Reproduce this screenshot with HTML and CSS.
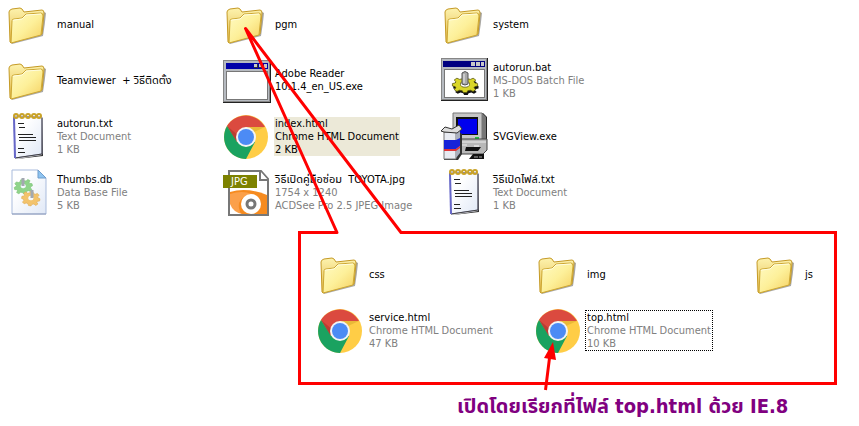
FILE: index.html
```html
<!DOCTYPE html>
<html lang="th">
<head>
    <meta charset="utf-8">
    <title>Files</title>
    <link rel="stylesheet" href="styles.css">
</head>
<body>
    <!-- icon set -->
    <svg class="icon-set" aria-hidden="true">
        <defs>
            <linearGradient id="front" x1="0" y1="0" x2="1" y2="1">
                <stop offset="0" stop-color="#fffbc4"/>
                <stop offset="0.5" stop-color="#fdf09a"/>
                <stop offset="1" stop-color="#f5cf5e"/>
            </linearGradient>
            <linearGradient id="back" x1="0" y1="0" x2="0" y2="1">
                <stop offset="0" stop-color="#fdf3ae"/>
                <stop offset="1" stop-color="#e3b848"/>
            </linearGradient>
            <linearGradient id="sheet" x1="0" y1="0" x2="1" y2="1">
                <stop offset="0.3" stop-color="#ffffff"/>
                <stop offset="1" stop-color="#e0e8f6"/>
            </linearGradient>
            <path id="gear" d="M-2-10h4l1 3 3 1 3-2 3 3-2 3 1 2 3 1v4l-3 1-1 2 2 3-3 3-3-2-3 1-1 3h-4l-1-3-3-1-3 2-3-3 2-3-1-2-3-1v-4l3-1 1-2-2-3 3-3 3 2 3-1z"/>
        </defs>
        <symbol id="folder" viewBox="0 0 48 48">
            <path d="M7 44l31-8q2-12 3-23l-2-1-3 20-29 10z" fill="#6f6c64" opacity=".6"/>
            <path d="M5 42L4 12q0-2 3-3l8-1q2 0 4 4l18-2q2 0 2 3l-2 21-31 9z" fill="url(#back)" stroke="#c59a25"/>
            <path d="M6 43l1-22q0-2 2-2l8-1 4-4 15-1q2 0 2 3l-2 19z" fill="url(#front)" stroke="#cda733"/>
            <path d="M8 21q0-1 1-1l8-1 4-4 15-1" fill="none" stroke="#fffde0"/>
        </symbol>
        <symbol id="window" viewBox="0 0 48 48">
            <path d="M0 4h48v43H0z" fill="#222"/>
            <path d="M0 4h47v42H0z" fill="#868686"/>
            <path d="M1 5h45v40H1z" fill="#b6bac0"/>
            <path d="M3 7h42v6H3z" fill="#0000a8"/>
            <path d="M31 8h4v4h-4zM36 8h4v4h-4zM41 8h3v4h-3z" fill="#c8c8c8"/>
            <path d="M34 8h1v4h-4v-1h3zM39 8h1v4h-4v-1h3z" fill="#333"/>
            <path d="M3 15h42v29H3z" fill="#777"/>
            <path d="M4 16h40v27H4z" fill="#fff"/>
        </symbol>
        <symbol id="batch" viewBox="0 0 48 48">
            <path d="M0 2h47v43H0z" fill="#222"/>
            <path d="M0 2h46v42H0z" fill="#868686"/>
            <path d="M1 3h44v40H1z" fill="#b6bac0"/>
            <path d="M2 5h42v6H2z" fill="#000080"/>
            <path d="M30 6h4v4h-4zM35 6h4v4h-4zM40 6h3v4h-3z" fill="#c8c8c8"/>
            <path d="M3 13h41v29H3z" fill="#777"/>
            <path d="M4 14h39v27H4z" fill="#fff"/>
            <g transform="translate(24 27) scale(.9 .6)">
                <use href="#gear" transform="translate(1 4)" fill="#111"/>
                <use href="#gear" fill="#d9d629" stroke="#55530a"/>
                <ellipse cy="2" rx="5" ry="5" fill="#fff" stroke="#55530a"/>
            </g>
            <path d="M21 17q3-3 6 0v11q-3 2-6 0z" fill="#a9a9a9" stroke="#555"/>
            <path d="M23 18v9" stroke="#eee"/>
        </symbol>
        <symbol id="chrome" viewBox="0 0 48 48">
            <circle cx="23" cy="25" r="22" fill="#ffcd46"/>
            <path d="M4 14A22 22 0 0 1 42 15H23L13 30z" fill="#db4a3f"/>
            <path d="M4 14A22 22 0 0 0 23 47L32 30 23 25 14 30z" fill="#1aa260"/>
            <path d="M23 15h19l-11 5z" fill="#c99a22" opacity=".4"/>
            <path d="M4 14l10 16 2-6z" fill="#8c2a22" opacity=".4"/>
            <circle cx="23" cy="25" r="10" fill="#f4f4f4"/>
            <circle cx="23" cy="25" r="8" fill="#4c8bf5"/>
        </symbol>
        <symbol id="notepad" viewBox="0 0 48 48">
            <path d="M11 47l26-4 1-37 0 38-26 3z" fill="#333"/>
            <path d="M9 4l28 1v37L10 46z" fill="url(#sheet)" stroke="#8486b4"/>
            <path d="M37 6v36L10 46" fill="none" stroke="#444"/>
            <path d="M9 5l1 41" stroke="#6667c8" stroke-width="2"/>
            <path d="M13 11.500h6M14 15.500h6M13 22.500h15M14 25.500h17M14 28.500h17M13 36.500h6M13 40.500h7" stroke="#222"/>
            <g fill="none" stroke="#c9a227" stroke-width="2">
                <circle cx="11" cy="4" r="2"/><circle cx="17" cy="4" r="2"/>
                <circle cx="23" cy="4" r="2"/><circle cx="29" cy="4" r="2"/>
                <circle cx="34" cy="4" r="2"/>
            </g>
        </symbol>
        <symbol id="database" viewBox="0 0 48 48">
            <path d="M7 2h26l8 8v36H7z" fill="url(#sheet)" stroke="#a9bbdc"/>
            <path d="M33 2v8h8z" fill="#8fc4f0" stroke="#6f9dcc"/>
            <path d="M7 46h34" stroke="#8f9cba"/>
            <g transform="translate(18 17) rotate(-12) scale(.65 .55)">
                <use href="#gear" fill="#8fd48a" stroke="#7cc279"/>
                <ellipse cy="2" rx="4" ry="4" fill="#f4f8ff"/>
            </g>
            <g transform="translate(26 29) rotate(8) scale(.65 .55)">
                <use href="#gear" fill="#f3c36c" stroke="#dfab52"/>
                <ellipse cy="2" rx="4" ry="4" fill="#f4f8ff"/>
            </g>
            <path d="M18 10v8M27 22v8" stroke="#a3a8b0" stroke-width="3"/>
        </symbol>
        <symbol id="setup" viewBox="0 0 48 48">
            <path d="M13 1h29l4 4v25H15z" fill="#222"/>
            <path d="M12 1h29v27H12z" fill="#c6c6c6" stroke="#777"/>
            <path d="M41 1l4 4v22l-4 2z" fill="#777"/>
            <path d="M15 5h22v18H15z" fill="#111"/>
            <path d="M17 7h19v15H17z" fill="#0000ee"/>
            <path d="M34 25h4v2h-4z" fill="#24c13c"/>
            <path d="M15 30l5-3h26v11l-4 4H15z" fill="#b8b8b8" stroke="#444"/>
            <path d="M20 30h25M20 33h6" stroke="#eee"/>
            <path d="M25 35h15l-3 4H24z" fill="#111"/>
            <path d="M33 34h5" stroke="#fff"/>
            <path d="M28 47l4-5h11v5z" fill="#111"/>
            <path d="M33 45h4M38 45h3" stroke="#aaa"/>
            <path d="M3 20l14-1 4 3v20l-4 6H3z" fill="#333"/>
            <path d="M3 20h12v27H3z" fill="#e8ebf2" stroke="#777"/>
            <path d="M15 20l4-2v23l-4 5z" fill="#a9afbd"/>
            <path d="M3 28h12l4-2v8l-4 3H3z" fill="#1723d8"/>
            <path d="M3 37h12l4-3v2l-4 3H3z" fill="#df3636"/>
            <path d="M0 19l4-4 7 2 7-4 3 4-5 4-13-1z" fill="#ddd" stroke="#333"/>
        </symbol>
    </svg>

    <main class="page">
        <ul class="files">
            <li class="file">
                <svg class="icon"><use href="#folder"/></svg>
                <div class="info"><p class="name">manual</p></div>
            </li>
            <li class="file">
                <svg class="icon"><use href="#folder"/></svg>
                <div class="info"><p class="name">pgm</p></div>
            </li>
            <li class="file">
                <svg class="icon"><use href="#folder"/></svg>
                <div class="info"><p class="name">system</p></div>
            </li>
            <li class="file">
                <svg class="icon"><use href="#folder"/></svg>
                <div class="info"><p class="name">Teamviewer&nbsp; + วิธีติดตั้ง</p></div>
            </li>
            <li class="file">
                <svg class="icon"><use href="#window"/></svg>
                <div class="info"><p class="name">Adobe Reader<br>10.1.4_en_US.exe</p></div>
            </li>
            <li class="file">
                <svg class="icon"><use href="#batch"/></svg>
                <div class="info">
                    <p class="name">autorun.bat</p>
                    <p>MS-DOS Batch File</p>
                    <p>1 KB</p>
                </div>
            </li>
            <li class="file">
                <svg class="icon"><use href="#notepad"/></svg>
                <div class="info">
                    <p class="name">autorun.txt</p>
                    <p>Text Document</p>
                    <p>1 KB</p>
                </div>
            </li>
            <li class="file">
                <svg class="icon"><use href="#chrome"/></svg>
                <div class="info selected">
                    <p class="name">index.html</p>
                    <p>Chrome HTML Document</p>
                    <p>2 KB</p>
                </div>
            </li>
            <li class="file">
                <svg class="icon"><use href="#setup"/></svg>
                <div class="info"><p class="name">SVGView.exe</p></div>
            </li>
            <li class="file">
                <svg class="icon"><use href="#database"/></svg>
                <div class="info">
                    <p class="name">Thumbs.db</p>
                    <p>Data Base File</p>
                    <p>5 KB</p>
                </div>
            </li>
            <li class="file">
                <svg class="icon" viewBox="0 0 48 48">
                    <path d="M6 3h32l7 8v36H6z" fill="#fff" stroke="#777" stroke-width="2"/>
                    <path d="M37 3v9h8" fill="#fff" stroke="#777" stroke-width="2"/>
                    <path d="M7 24q17-5 37 3v19H7z" fill="#f68b1f"/>
                    <path d="M7 26q12-4 22 0-10 1-13 9-1 5 2 11H7z" fill="#fba04a"/>
                    <path d="M7 36q3 8 12 10H7z" fill="#fff"/>
                    <circle cx="28" cy="36" r="10" fill="#fff"/>
                    <circle cx="28" cy="36" r="4" fill="#fff" stroke="#777" stroke-width="3"/>
                    <path d="M0 7h34v13H0z" fill="#7d8200"/>
                    <text class="badge-text" x="8" y="17">JPG</text>
                </svg>
                <div class="info">
                    <p class="name">วิธีเปิดคู่มือซ่อม&nbsp; TOYOTA.jpg</p>
                    <p>1754 x 1240</p>
                    <p>ACDSee Pro 2.5 JPEG Image</p>
                </div>
            </li>
            <li class="file">
                <svg class="icon"><use href="#notepad"/></svg>
                <div class="info">
                    <p class="name">วิธีเปิดไฟล์.txt</p>
                    <p>Text Document</p>
                    <p>1 KB</p>
                </div>
            </li>
        </ul>

        <section class="callout">
            <ul class="files">
                <li class="file">
                    <svg class="icon"><use href="#folder"/></svg>
                    <div class="info"><p class="name">css</p></div>
                </li>
                <li class="file">
                    <svg class="icon"><use href="#folder"/></svg>
                    <div class="info"><p class="name">img</p></div>
                </li>
                <li class="file">
                    <svg class="icon"><use href="#folder"/></svg>
                    <div class="info"><p class="name">js</p></div>
                </li>
                <li class="file">
                    <svg class="icon"><use href="#chrome"/></svg>
                    <div class="info">
                        <p class="name">service.html</p>
                        <p>Chrome HTML Document</p>
                        <p>47 KB</p>
                    </div>
                </li>
                <li class="file">
                    <svg class="icon"><use href="#chrome"/></svg>
                    <div class="info focused">
                        <p class="name">top.html</p>
                        <p>Chrome HTML Document</p>
                        <p>10 KB</p>
                    </div>
                </li>
            </ul>
        </section>

        <p class="caption">เปิดโดยเรียกที่ไฟล์ top.html ด้วย IE.8</p>

        <!-- callout tail and arrow drawn over the files -->
        <svg class="marks" width="859" height="426" viewBox="0 0 859 426" aria-hidden="true">
            <path d="M337 232.500h64" stroke="#fff" stroke-width="5"/>
            <path d="M336 232.500h1L245.500 28.500 401 232.500h1" fill="none" stroke="#f00" stroke-width="3" stroke-linejoin="round"/>
            <path d="M545.500 390l4-32" stroke="#f00" stroke-width="3"/>
            <path d="M553 342l3 18-12-2z" fill="#f00"/>
        </svg>
    </main>
</body>
</html>
```

FILE: styles.css
```css
body {
    margin: 0;
    background-color: #fff;
    font-family: Tahoma, "DejaVu Sans Condensed", "Noto Sans Thai", sans-serif;
    font-size: 11px;
    line-height: 13px;
    color: #808080;
}
p {
    margin: 0;
}
.icon-set {
    position: absolute;
    width: 0;
    height: 0;
}
.page {
    position: relative;
}
.files {
    list-style: none;
    margin: 0;
    padding: 0 0 0 5px;
    display: grid;
    grid-template-columns: 218px 218px auto;
    grid-auto-rows: 48px;
    row-gap: 8px;
}
.file {
    display: flex;
    align-items: center;
    gap: 3px;
    white-space: nowrap;
}
.icon {
    width: 48px;
    height: 48px;
    flex-shrink: 0;
}
.info {
    padding: 0 1px;
}
.name {
    color: #000;
}
.selected {
    background-color: #ece9d8;
    color: #000;
}
.focused {
    outline: 1px dotted #000;
}
.callout {
    margin: 15px 22px 0 298px;
    padding: 16px 0 28px 16px;
    border: 3px solid #f00;
}
.callout .files {
    padding: 0;
}
.caption {
    margin: 8px 0 0 457px;
    font-size: 20px;
    font-weight: bold;
    line-height: 26px;
    color: #800080;
    white-space: nowrap;
}
.badge-text {
    font-size: 11px;
    fill: #fff;
}
.marks {
    position: absolute;
    top: 0;
    left: 0;
    pointer-events: none;
}
```
